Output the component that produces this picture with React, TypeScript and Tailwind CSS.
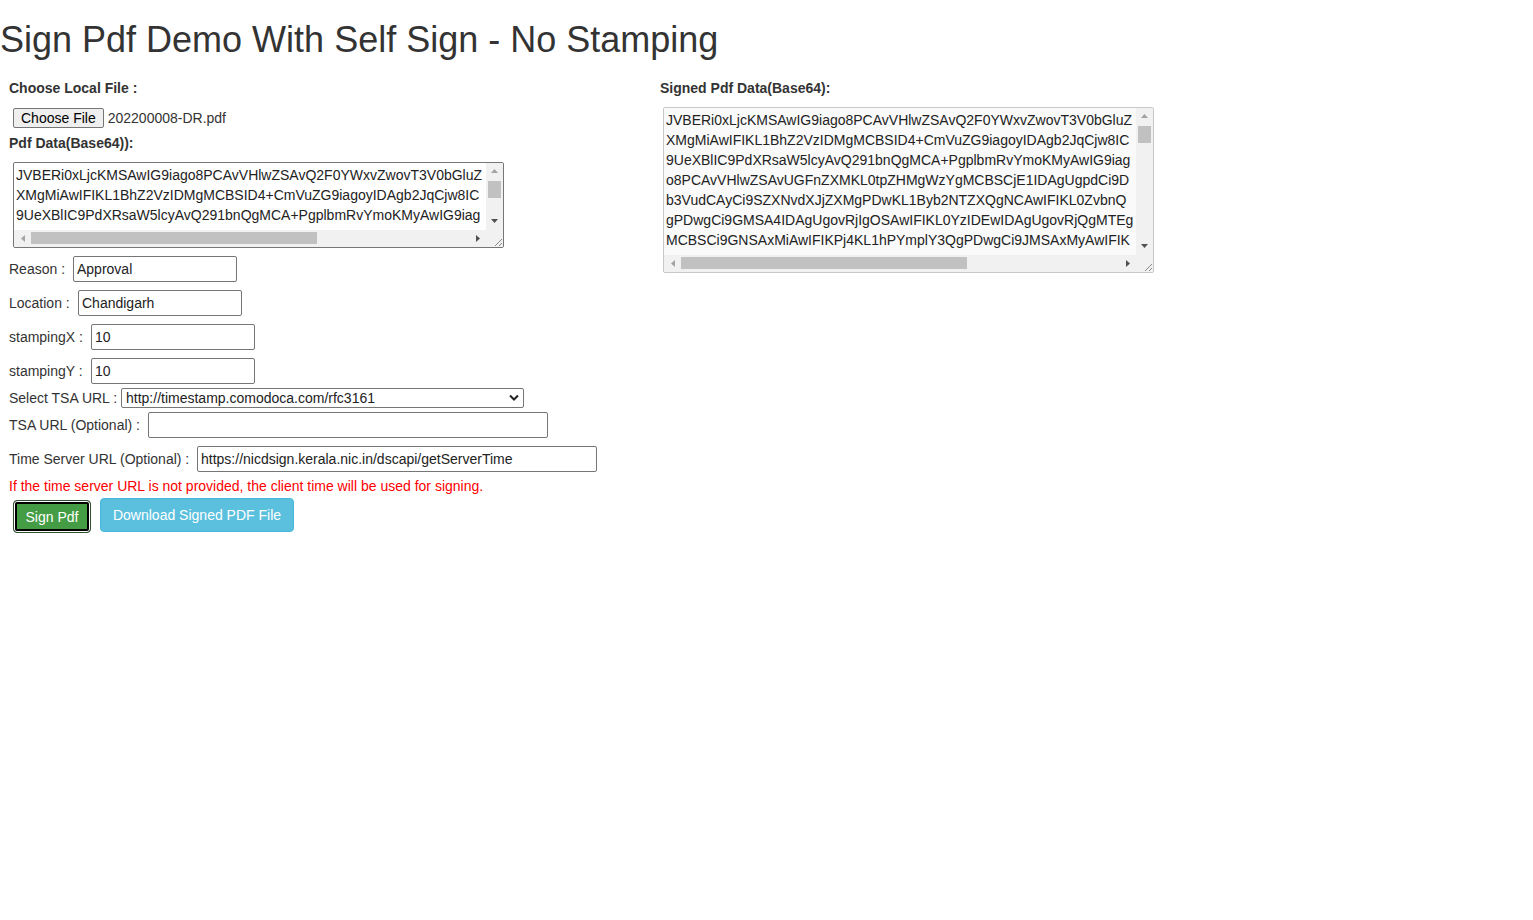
import React from "react";

const leftLines = [
  "JVBERi0xLjcKMSAwIG9iago8PCAvVHlwZSAvQ2F0YWxvZwovT3V0bGluZ",
  "XMgMiAwIFIKL1BhZ2VzIDMgMCBSID4+CmVuZG9iagoyIDAgb2JqCjw8IC",
  "9UeXBlIC9PdXRsaW5lcyAvQ291bnQgMCA+PgplbmRvYmoKMyAwIG9iag",
];

const rightLines = [
  "JVBERi0xLjcKMSAwIG9iago8PCAvVHlwZSAvQ2F0YWxvZwovT3V0bGluZ",
  "XMgMiAwIFIKL1BhZ2VzIDMgMCBSID4+CmVuZG9iagoyIDAgb2JqCjw8IC",
  "9UeXBlIC9PdXRsaW5lcyAvQ291bnQgMCA+PgplbmRvYmoKMyAwIG9iag",
  "o8PCAvVHlwZSAvUGFnZXMKL0tpZHMgWzYgMCBSCjE1IDAgUgpdCi9D",
  "b3VudCAyCi9SZXNvdXJjZXMgPDwKL1Byb2NTZXQgNCAwIFIKL0ZvbnQ",
  "gPDwgCi9GMSA4IDAgUgovRjIgOSAwIFIKL0YzIDEwIDAgUgovRjQgMTEg",
  "MCBSCi9GNSAxMiAwIFIKPj4KL1hPYmplY3QgPDwgCi9JMSAxMyAwIFIK",
];

interface ScrollBoxProps {
  lines: string[];
  height: number;
  className: string;
}

// fake textarea with windows-style scrollbars
const ScrollBox: React.FC<ScrollBoxProps> = ({ lines, height, className }) => {
  return (
    <div className={`flex w-[491px] flex-col overflow-hidden ${className}`} style={{ height }}>
      <div className="flex min-h-0 flex-1">
        <div className="min-w-0 flex-1 overflow-hidden whitespace-nowrap pl-[2px] pt-[2px] text-[14px] leading-[20px] text-[#222]">
          {lines.map((l, i) => (
            <div key={i}>{l}</div>
          ))}
        </div>
        <div className="flex w-[17px] shrink-0 flex-col items-center bg-[#f1f1f1]">
          <div className="flex h-[17px] w-full items-center justify-center">
            <svg width="7" height="4" viewBox="0 0 7 4">
              <path d="M0 4 L3.5 0 L7 4 Z" fill="#a3a3a3" />
            </svg>
          </div>
          <div className="mt-[1px] h-[17px] w-[13px] bg-[#c1c1c1]" />
          <div className="flex-1" />
          <div className="flex h-[17px] w-full items-center justify-center">
            <svg width="7" height="4" viewBox="0 0 7 4">
              <path d="M0 0 L3.5 4 L7 0 Z" fill="#505050" />
            </svg>
          </div>
        </div>
      </div>
      <div className="flex h-[17px] shrink-0">
        <div className="flex flex-1 items-center bg-[#f1f1f1]">
          <div className="flex h-[17px] w-[17px] items-center justify-center">
            <svg width="4" height="7" viewBox="0 0 4 7">
              <path d="M4 0 L0 3.5 L4 7 Z" fill="#a3a3a3" />
            </svg>
          </div>
          <div className="h-[12px] w-[286px] bg-[#c1c1c1]" />
          <div className="flex-1" />
          <div className="flex h-[17px] w-[17px] items-center justify-center">
            <svg width="4" height="7" viewBox="0 0 4 7">
              <path d="M0 0 L4 3.5 L0 7 Z" fill="#505050" />
            </svg>
          </div>
        </div>
        <div className="flex w-[17px] items-end justify-end bg-[#f1f1f1]">
          <svg width="10" height="10" viewBox="0 0 10 10">
            <path d="M9 2 L2 9 M9 6 L6 9" stroke="#8a8a8a" strokeWidth="1" />
          </svg>
        </div>
      </div>
    </div>
  );
};

interface FieldRowProps {
  label: string;
  labelWidth: string;
  inputWidth: string;
  value: string;
  className: string;
}

const FieldRow: React.FC<FieldRowProps> = ({ label, labelWidth, inputWidth, value, className }) => (
  <div className={`flex items-center ${className}`}>
    <span className={`shrink-0 ${labelWidth}`}>{label}</span>
    <input
      defaultValue={value}
      className={`h-[26px] ${inputWidth} rounded-[2px] border border-[#767676] px-[3px] text-[14px] text-[#222] outline-none`}
    />
  </div>
);

export default function App() {
  return (
    <div className="min-h-screen bg-white font-['Liberation_Sans',Arial,sans-serif] text-[14px] leading-[20px] text-[#333]">
      <h1 className="mb-[10px] mt-[20px] text-[36px] font-normal leading-[1.1]">
        Sign Pdf Demo With Self Sign - No Stamping
      </h1>
      <div className="flex">
        <div className="w-[660px] shrink-0 pl-[9px]">
          <div className="mt-[8px] font-bold">Choose Local File :</div>
          <div className="mt-[10px] flex h-[20px] items-center pl-[4px]">
            <button className="h-[20px] rounded-[2px] border border-[#767676] bg-[#efefef] px-[7px] text-[14px] leading-[18px] text-black">
              Choose File
            </button>
            <span className="ml-[4px] text-[#333]">202200008-DR.pdf</span>
          </div>
          <div className="mt-[5px] font-bold">Pdf Data(Base64)):</div>
          <ScrollBox
            lines={leftLines}
            height={86}
            className="ml-[4px] mt-[9px] rounded-[2px] border border-[#767676] bg-white"
          />
          <FieldRow className="mt-[8px]" label="Reason :" labelWidth="w-[64px]" inputWidth="w-[164px]" value="Approval" />
          <FieldRow className="mt-[8px]" label="Location :" labelWidth="w-[69px]" inputWidth="w-[164px]" value="Chandigarh" />
          <FieldRow className="mt-[8px]" label="stampingX :" labelWidth="w-[82px]" inputWidth="w-[164px]" value="10" />
          <FieldRow className="mt-[8px]" label="stampingY :" labelWidth="w-[82px]" inputWidth="w-[164px]" value="10" />
          <div className="mt-[4px] flex items-center">
            <span className="w-[112px] shrink-0">Select TSA URL :</span>
            <div className="relative h-[20px] w-[403px]">
              <select className="h-[20px] w-full appearance-none rounded-[2px] border border-[#767676] bg-white pl-[4px] text-[14px] leading-[18px] text-[#222] outline-none">
                <option>http://timestamp.comodoca.com/rfc3161</option>
              </select>
              <svg
                className="pointer-events-none absolute right-[5px] top-[6px]"
                width="10"
                height="7"
                viewBox="0 0 10 7"
              >
                <path d="M1 1.5 L5 5.5 L9 1.5" stroke="#222" strokeWidth="2" fill="none" />
              </svg>
            </div>
          </div>
          <FieldRow className="mt-[4px]" label="TSA URL (Optional) :" labelWidth="w-[139px]" inputWidth="w-[400px]" value="" />
          <FieldRow
            className="mt-[8px]"
            label="Time Server URL (Optional) :"
            labelWidth="w-[188px]"
            inputWidth="w-[400px]"
            value="https://nicdsign.kerala.nic.in/dscapi/getServerTime"
          />
          <div className="mt-[4px] text-[#ff0000]">
            If the time server URL is not provided, the client time will be used for signing.
          </div>
          <div className="mt-[2px] flex items-start pl-[4px]">
            <button className="mt-[2px] h-[33px] w-[78px] rounded-[4px] border border-[#2f4f2f] bg-[#449d44] pt-[2px] text-[14px] text-white shadow-[inset_0_0_0_1px_#ffffff,inset_0_0_0_3px_#000000]">
              Sign Pdf
            </button>
            <button className="ml-[9px] h-[34px] w-[194px] rounded-[4px] border border-[#46b8da] bg-[#5bc0de] text-[14px] text-white">
              Download Signed PDF File
            </button>
          </div>
        </div>
        <div className="flex-1">
          <div className="mt-[8px] font-bold">Signed Pdf Data(Base64):</div>
          <ScrollBox
            lines={rightLines}
            height={166}
            className="ml-[3px] mt-[9px] rounded-[2px] border border-[#c8c8c8] bg-[#fafafa]"
          />
        </div>
      </div>
    </div>
  );
}
